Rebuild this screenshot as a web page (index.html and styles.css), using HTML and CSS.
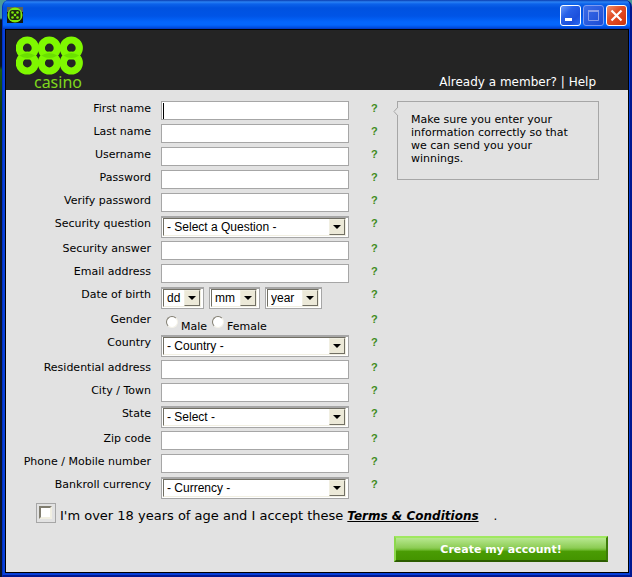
FILE: index.html
```html
<!DOCTYPE html>
<html lang="en">

<head>
  <meta charset="utf-8">
  <title>888 casino - Create account</title>
  <link rel="stylesheet" href="styles.css">
</head>

<body>
  <div class="window">
    <div class="title-bar">
      <svg class="app-icon" width="16" height="16" viewBox="0 0 16 16">
        <rect width="16" height="16" fill="#14180f"/>
        <rect width="16" height="5" fill="#5d6558"/>
        <circle cx="8" cy="8" r="7.5" fill="#7fe80c"/>
        <rect x="2.500" y="3" width="11" height="10" rx="3" fill="#1d2b10"/>
        <g fill="#7fe80c">
          <circle cx="5.500" cy="5.500" r="1.300"/>
          <circle cx="10.500" cy="5.500" r="1.300"/>
          <circle cx="8" cy="8" r="1.300"/>
          <circle cx="5.500" cy="10.500" r="1.300"/>
          <circle cx="10.500" cy="10.500" r="1.300"/>
        </g>
      </svg>
      <div class="window-buttons">
        <button class="window-btn" type="button" aria-label="Minimize">
          <svg width="19" height="19" viewBox="0 0 19 19"><rect x="4" y="12" width="7" height="3" fill="#fff"/></svg>
        </button>
        <button class="window-btn disabled" type="button" aria-label="Maximize" disabled>
          <svg width="19" height="19" viewBox="0 0 19 19"><path d="M4.500 5.500h10v9h-10zM4 5.500h11M4 4.500h11" fill="none" stroke="#8a9fea"/></svg>
        </button>
        <button class="window-btn close" type="button" aria-label="Close">
          <svg width="19" height="19" viewBox="0 0 19 19"><path d="M4.500 4.500l10 10M14.500 4.500l-10 10" stroke="#fff" stroke-width="2.200"/></svg>
        </button>
      </div>
    </div>

    <div class="content">
      <div class="header">
        <div class="logo">
          <svg width="68" height="40" viewBox="0.700 0 68 40">
            <g fill="none" stroke="#7ff800" stroke-width="7.200">
              <circle cx="12" cy="12" r="8"/>
              <circle cx="34" cy="12" r="8"/>
              <circle cx="56" cy="12" r="8"/>
              <circle cx="12" cy="27" r="8"/>
              <circle cx="34" cy="27" r="8"/>
              <circle cx="56" cy="27" r="8"/>
            </g>
            <g fill="#6be000">
              <path d="M4 19.500q8-5 16 0q-8 5-16 0z"/>
              <path d="M26 19.500q8-5 16 0q-8 5-16 0z"/>
              <path d="M48 19.500q8-5 16 0q-8 5-16 0z"/>
            </g>
          </svg>
          <span class="logo-text">casino</span>
        </div>
        <div class="header-links">
          <a href="#">Already a member?</a> | <a href="#">Help</a>
        </div>
      </div>

      <form class="form">
        <div class="form-main">
          <div class="fields">
            <div class="row">
              <label for="first-name">First name</label>
              <input id="first-name" class="text-input active" type="text">
              <a class="help" href="#">?</a>
            </div>
            <div class="row">
              <label for="last-name">Last name</label>
              <input id="last-name" class="text-input" type="text">
              <a class="help" href="#">?</a>
            </div>
            <div class="row">
              <label for="username">Username</label>
              <input id="username" class="text-input" type="text">
              <a class="help" href="#">?</a>
            </div>
            <div class="row">
              <label for="password">Password</label>
              <input id="password" class="text-input" type="password">
              <a class="help" href="#">?</a>
            </div>
            <div class="row">
              <label for="verify">Verify password</label>
              <input id="verify" class="text-input" type="password">
              <a class="help" href="#">?</a>
            </div>
            <div class="row select-row">
              <label for="question">Security question</label>
              <div class="select-box"><select id="question"><option>- Select a Question -</option></select><span class="arrow"></span></div>
              <a class="help" href="#">?</a>
            </div>
            <div class="row">
              <label for="answer">Security answer</label>
              <input id="answer" class="text-input" type="text">
              <a class="help" href="#">?</a>
            </div>
            <div class="row">
              <label for="email">Email address</label>
              <input id="email" class="text-input" type="email">
              <a class="help" href="#">?</a>
            </div>
            <div class="row select-row">
              <label for="day">Date of birth</label>
              <div class="date">
                <div class="select-box day"><select id="day"><option>dd</option></select><span class="arrow"></span></div>
                <div class="select-box month"><select aria-label="Month"><option>mm</option></select><span class="arrow"></span></div>
                <div class="select-box year"><select aria-label="Year"><option>year</option></select><span class="arrow"></span></div>
              </div>
              <a class="help" href="#">?</a>
            </div>
            <div class="row">
              <span class="row-label">Gender</span>
              <div class="gender">
                <input id="male" type="radio" name="gender"><label for="male">Male</label>
                <input id="female" type="radio" name="gender"><label for="female">Female</label>
              </div>
              <a class="help" href="#">?</a>
            </div>
            <div class="row select-row">
              <label for="country">Country</label>
              <div class="select-box"><select id="country"><option>- Country -</option></select><span class="arrow"></span></div>
              <a class="help" href="#">?</a>
            </div>
            <div class="row">
              <label for="address">Residential address</label>
              <input id="address" class="text-input" type="text">
              <a class="help" href="#">?</a>
            </div>
            <div class="row">
              <label for="city">City / Town</label>
              <input id="city" class="text-input" type="text">
              <a class="help" href="#">?</a>
            </div>
            <div class="row select-row">
              <label for="state">State</label>
              <div class="select-box"><select id="state"><option>- Select -</option></select><span class="arrow"></span></div>
              <a class="help" href="#">?</a>
            </div>
            <div class="row">
              <label for="zip">Zip code</label>
              <input id="zip" class="text-input" type="text">
              <a class="help" href="#">?</a>
            </div>
            <div class="row">
              <label for="phone">Phone / Mobile number</label>
              <input id="phone" class="text-input" type="tel">
              <a class="help" href="#">?</a>
            </div>
            <div class="row select-row">
              <label for="currency">Bankroll currency</label>
              <div class="select-box"><select id="currency"><option>- Currency -</option></select><span class="arrow"></span></div>
              <a class="help" href="#">?</a>
            </div>
          </div>

          <div class="tip">
            <svg class="tip-arrow" width="6" height="9" viewBox="0 0 6 9"><path d="M5 0L1 4.500L5 9" fill="#e2e2e2" stroke="#a6a6a6"/></svg>
            Make sure you enter your information correctly so that we can send you your winnings.
          </div>
        </div>

        <div class="terms">
          <span class="check-box"><input id="terms" type="checkbox"></span>
          <div class="terms-text">
            <label for="terms">I'm over 18 years of age and I accept these</label>
            <a href="#">Terms &amp; Conditions</a>
            <span class="dot">.</span>
          </div>
        </div>

        <div class="actions">
          <button class="submit-btn" type="submit">Create my account!</button>
        </div>
      </form>
    </div>
  </div>
</body>

</html>
```

FILE: styles.css
```css
* {
  box-sizing: border-box;
  margin: 0;
  padding: 0;
}

body {
  font-family: Verdana, 'DejaVu Sans', sans-serif;
  font-size: 11px;
  line-height: 13px;
  color: #000000;
  background: linear-gradient(#4a9a9c 0, #4a9a9c 18px, #0a1420 20px, #0a1420 66px, #1c5a10 70px, #0c3010 120px, #0a1428 200px);
  min-height: 100vh;
  display: flex;
  padding-left: 2px;
}

/* window frame */
.window {
  flex: 1;
  display: flex;
  flex-direction: column;
  background-color: #0840d8;
  border-left: 1px solid #0030c0;
  border-right: 2px solid #001890;
  border-bottom: 2px solid #001890;
  border-radius: 7px 7px 0 0;
  padding: 0 1px 2px 2px;
  overflow: hidden;
}

.title-bar {
  height: 29px;
  margin: 0 -3px;
  padding: 4px 5px 0 5px;
  display: flex;
  justify-content: space-between;
  background: linear-gradient(#0a3cae 0, #2a82f4 2px, #0c62ea 4px, #0052e0 8px, #0054e6 16px, #0466fc 22px, #0466fc 25px, #0048d8 28px, #0034b4 29px);
}

.app-icon {
  margin-top: 3px;
}

.window-buttons {
  display: flex;
  gap: 2px;
  padding-top: 1px;
}

.window-btn {
  width: 21px;
  height: 21px;
  border: 1px solid #ffffff;
  border-radius: 3px;
  background: linear-gradient(135deg, #6a9af8 0, #2860e8 35%, #1c50dc 70%, #2c6cf4 100%);
}

.window-btn svg {
  display: block;
}

.window-btn.disabled {
  border-color: #7d9af0;
  background: linear-gradient(135deg, #3c6ce8, #1c4cd4);
}

.window-btn.close {
  background: linear-gradient(135deg, #f0906c 0, #e25028 40%, #d83c14 80%, #c03810 100%);
}

.content {
  flex: 1;
  display: flex;
  flex-direction: column;
  background-color: #e2e2e2;
  border: 1px solid #000000;
}

/* header */
.header {
  height: 60px;
  display: flex;
  justify-content: space-between;
  align-items: flex-end;
  background-color: #242424;
  padding: 0 32px 0 9px;
}

.logo {
  width: 70px;
  height: 56px;
  display: flex;
  flex-direction: column;
  padding-left: 1px;
}

.logo svg {
  margin-top: 2px;
  flex: none;
}

.logo-text {
  align-self: flex-end;
  color: #7fd81c;
  font-family: 'Noto Sans', sans-serif;
  font-size: 16px;
  line-height: 12px;
  padding-right: 3px;
}

.header-links {
  color: #ffffff;
  font-size: 12px;
  line-height: 16px;
}

.header-links a {
  color: #ffffff;
  text-decoration: none;
}

/* form */
.form {
  padding: 11px 0 10px;
}

.form-main {
  display: flex;
  align-items: flex-start;
}

.fields {
  width: 391px;
}

.row {
  display: flex;
  align-items: flex-start;
  height: 23px;
}

.select-row {
  height: 25px;
}

.row > label,
.row-label {
  width: 145px;
  margin-right: 10px;
  padding-top: 1px;
  text-align: right;
  white-space: nowrap;
}

.text-input {
  width: 188px;
  height: 19px;
  background-color: #ffffff;
  border: 1px solid #a6a6a6;
  padding: 0 1px;
  font-size: 12px;
  outline: none;
}

/* caret in the current field */
.text-input.active {
  background: linear-gradient(#000000, #000000) 1px 1px / 1px 16px no-repeat #ffffff;
}

.help {
  margin-left: auto;
  width: 26px;
  padding-top: 1px;
  color: #3f8c1c;
  font-family: Arial, 'Liberation Sans', sans-serif;
  font-weight: bold;
  text-decoration: none;
}

.select-box {
  position: relative;
  width: 188px;
  height: 22px;
  border: 1px solid #a6a6a6;
  border-top-width: 2px;
  background-color: #ffffff;
  padding: 0 2px 1px 1px;
}

.select-box select {
  appearance: none;
  display: block;
  width: 100%;
  height: 18px;
  border: 1px solid #716f64;
  border-right-color: #f1efe2;
  border-bottom-color: #f1efe2;
  border-radius: 0;
  background-color: #ffffff;
  color: #000000;
  font-family: Arial, 'Liberation Sans', sans-serif;
  font-size: 12px;
  padding-left: 3px;
  outline: none;
}

.arrow {
  position: absolute;
  top: 1px;
  right: 3px;
  width: 16px;
  height: 16px;
  background-color: #ece9d8;
  border: 1px solid #f1efe2;
  border-right-color: #716f64;
  border-bottom-color: #716f64;
  pointer-events: none;
}

.arrow::after {
  content: '';
  position: absolute;
  top: 5px;
  left: 3px;
  border: 4px solid transparent;
  border-top-color: #000000;
  border-bottom: 0;
}

.date {
  display: flex;
  gap: 5px;
}

.day {
  width: 43px;
}

.month {
  width: 51px;
}

.year {
  width: 57px;
}

.gender {
  display: flex;
  align-items: flex-start;
  padding: 4px 0 0 5px;
}

.gender label {
  padding: 4px 5px 0 3px;
}

.gender input {
  appearance: none;
  width: 12px;
  height: 12px;
  border: 1px solid #807d70;
  border-right-color: #f4f2e8;
  border-bottom-color: #f4f2e8;
  border-radius: 50%;
  background-color: #ffffff;
}

.tip {
  position: relative;
  flex: 1;
  min-height: 79px;
  margin-right: 29px;
  padding: 11px 20px 11px 13px;
  border: 1px solid #a6a6a6;
}

.tip-arrow {
  position: absolute;
  top: 5px;
  left: -5px;
}

.terms {
  display: flex;
  align-items: flex-start;
  padding: 1px 0 0 30px;
}

.check-box {
  width: 20px;
  height: 20px;
  border: 1px solid #a6a6a6;
  padding: 2px;
  margin-right: 4px;
}

.check-box input {
  appearance: none;
  display: block;
  width: 13px;
  height: 13px;
  border: 2px solid #807d70;
  border-right-color: #f1efe2;
  border-bottom-color: #f1efe2;
  background-color: #ffffff;
}

.terms-text {
  display: flex;
  align-items: baseline;
  padding-top: 5px;
  font-size: 12px;
  line-height: 16px;
}

.terms-text label {
  font-size: 13px;
}

.terms-text a {
  margin-left: 4px;
  color: #000000;
  font-weight: bold;
  font-style: italic;
}

.dot {
  margin-left: 15px;
}

.actions {
  display: flex;
  justify-content: flex-end;
  padding: 12px 20px 0 0;
}

.submit-btn {
  width: 214px;
  height: 26px;
  border: 2px solid;
  border-color: #a0e860 #3c7c08 #2c5c00 #8cd84c;
  background: linear-gradient(#b8e890 0, #8ccc54 45%, #6cb82c 55%, #4a9c04 60%, #449400 100%);
  color: #ffffff;
  font-family: Verdana, 'DejaVu Sans', sans-serif;
  font-size: 11px;
  font-weight: bold;
}
```
